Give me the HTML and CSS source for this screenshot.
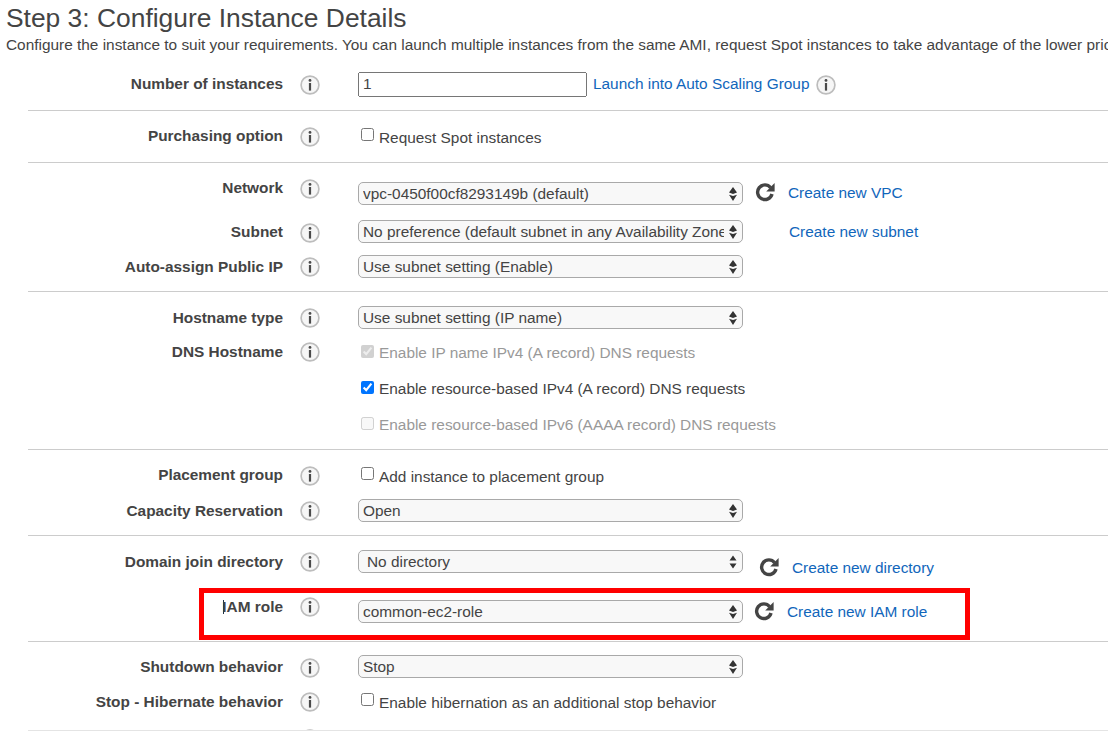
FILE: index.html
```html
<!DOCTYPE html>
<html lang="en">
<head>
  <meta charset="UTF-8">
  <title>Step 3: Configure Instance Details</title>
  <link rel="stylesheet" href="styles.css">
</head>
<body>
  <svg class="defs" width="0" height="0">
    <symbol id="info" viewBox="0 0 20 20">
      <circle cx="10" cy="10" r="8.9" fill="#f6f6f6" stroke="#bdbdbd" stroke-width="1.7"/>
      <circle cx="10" cy="5.4" r="1.4" fill="#4a4a4a"/>
      <rect x="8.9" y="8" width="2.2" height="7.6" fill="#4a4a4a"/>
    </symbol>
    <symbol id="refresh" viewBox="0 0 20 20">
      <path d="M15.6 5.6A7.3 7.3 0 1 0 17 12" fill="none" stroke="#444" stroke-width="3.4"/>
      <path d="M19.6 1v8.4h-8.4z" fill="#444"/>
    </symbol>
  </svg>

  <h1>Step 3: Configure Instance Details</h1>
  <p class="intro">Configure the instance to suit your requirements. You can launch multiple instances from the same AMI, request Spot instances to take advantage of the lower pricing, assign an access management role to the instance, and more.</p>

  <form class="details">
    <!-- Instances -->
    <div class="section s-instances">
      <div class="row row-input">
        <label class="name">Number of instances</label>
        <svg class="info"><use href="#info"/></svg>
        <div class="field">
          <input class="count" type="text" value="1">
          <a class="link launch" href="#">Launch into Auto Scaling Group</a>
          <svg class="info info-inline"><use href="#info"/></svg>
        </div>
      </div>
    </div>

    <!-- Purchasing -->
    <div class="section s-purchasing">
      <div class="row row-check">
        <label class="name">Purchasing option</label>
        <svg class="info"><use href="#info"/></svg>
        <div class="field"><label class="check"><input type="checkbox">Request Spot instances</label></div>
      </div>
    </div>

    <!-- Network -->
    <div class="section s-network">
      <div class="row row-up">
        <label class="name">Network</label>
        <svg class="info"><use href="#info"/></svg>
        <div class="field">
          <select class="pick"><option>vpc-0450f00cf8293149b (default)</option></select>
          <svg class="refresh refresh-vpc"><use href="#refresh"/></svg>
          <a class="link link-vpc" href="#">Create new VPC</a>
        </div>
      </div>
      <div class="row row-low gap-15">
        <label class="name">Subnet</label>
        <svg class="info"><use href="#info"/></svg>
        <div class="field">
          <select class="pick"><option>No preference (default subnet in any Availability Zone)</option></select>
          <a class="link link-subnet" href="#">Create new subnet</a>
        </div>
      </div>
      <div class="row gap-12">
        <label class="name">Auto-assign Public IP</label>
        <svg class="info"><use href="#info"/></svg>
        <div class="field"><select class="pick"><option>Use subnet setting (Enable)</option></select></div>
      </div>
    </div>

    <!-- Hostname -->
    <div class="section s-hostname">
      <div class="row">
        <label class="name">Hostname type</label>
        <svg class="info"><use href="#info"/></svg>
        <div class="field"><select class="pick"><option>Use subnet setting (IP name)</option></select></div>
      </div>
      <div class="row row-check row-dns gap-12">
        <label class="name">DNS Hostname</label>
        <svg class="info"><use href="#info"/></svg>
        <div class="field"><label class="check off"><input type="checkbox" checked disabled>Enable IP name IPv4 (A record) DNS requests</label></div>
      </div>
      <div class="row row-check gap-12">
        <div class="name"></div>
        <div class="info"></div>
        <div class="field"><label class="check"><input type="checkbox" checked>Enable resource-based IPv4 (A record) DNS requests</label></div>
      </div>
      <div class="row row-check gap-12">
        <div class="name"></div>
        <div class="info"></div>
        <div class="field"><label class="check off"><input type="checkbox" disabled>Enable resource-based IPv6 (AAAA record) DNS requests</label></div>
      </div>
    </div>

    <!-- Placement -->
    <div class="section s-placement">
      <div class="row row-check">
        <label class="name">Placement group</label>
        <svg class="info"><use href="#info"/></svg>
        <div class="field"><label class="check"><input type="checkbox">Add instance to placement group</label></div>
      </div>
      <div class="row gap-11">
        <label class="name">Capacity Reservation</label>
        <svg class="info"><use href="#info"/></svg>
        <div class="field"><select class="pick"><option>Open</option></select></div>
      </div>
    </div>

    <!-- Directory and role -->
    <div class="section s-directory">
      <div class="row">
        <label class="name">Domain join directory</label>
        <svg class="info"><use href="#info"/></svg>
        <div class="field">
          <select class="pick pick-plain"><option>No directory</option></select>
          <svg class="refresh refresh-dir"><use href="#refresh"/></svg>
          <a class="link link-dir" href="#">Create new directory</a>
        </div>
      </div>
      <div class="row row-up row-iam gap-27">
        <label class="name"><span class="caret"></span>IAM role</label>
        <svg class="info"><use href="#info"/></svg>
        <div class="field">
          <select class="pick"><option>common-ec2-role</option></select>
          <svg class="refresh refresh-iam"><use href="#refresh"/></svg>
          <a class="link link-iam" href="#">Create new IAM role</a>
        </div>
      </div>
      <div class="callout"></div>
    </div>

    <!-- Shutdown -->
    <div class="section s-shutdown">
      <div class="row row-low">
        <label class="name">Shutdown behavior</label>
        <svg class="info"><use href="#info"/></svg>
        <div class="field"><select class="pick"><option>Stop</option></select></div>
      </div>
      <div class="row row-check row-stop gap-12">
        <label class="name">Stop - Hibernate behavior</label>
        <svg class="info"><use href="#info"/></svg>
        <div class="field"><label class="check"><input type="checkbox">Enable hibernation as an additional stop behavior</label></div>
      </div>
      <div class="row row-cut gap-15">
        <div class="name"></div>
        <svg class="info"><use href="#info"/></svg>
      </div>
    </div>
  </form>
</body>
</html>
```

FILE: styles.css
```css
html, body {
  margin: 0;
  height: 737px;
  overflow: hidden;
  background-color: #fff;
}

body {
  font-family: "Liberation Sans", Arial, sans-serif;
  font-size: 15.4px;
  color: #444;
}

.defs {
  position: absolute;
}

h1 {
  margin: 0;
  padding: 3px 0 0 6px;
  height: 32px;
  font-size: 26.4px;
  line-height: 30px;
  font-weight: normal;
  white-space: nowrap;
}

.intro {
  margin: 0;
  padding-left: 6px;
  height: 25px;
  line-height: 20px;
  white-space: nowrap;
  overflow: hidden;
}

.details {
  margin-left: 28px;
}

.section {
  position: relative;
  border-bottom: 1px solid #ccc;
}

.s-instances { padding: 12px 0 13px; }
.s-purchasing { padding: 14px 0 13px; }
.s-network { padding: 19px 0 13px; }
.s-hostname { padding: 14px 0 12px; }
.s-placement { padding: 14px 0 13px; }
.s-directory { padding: 14px 0 18px; }
.s-shutdown { padding: 13px 0 0; height: 75px; overflow: hidden; border-bottom-color: #e4e4e4; }

.row {
  display: flex;
  align-items: center;
  height: 23px;
}

.row-input { height: 25px; }
.row-check { height: 24px; }

.gap-11 { margin-top: 11px; }
.gap-12 { margin-top: 12px; }
.gap-15 { margin-top: 15px; }
.gap-27 { margin-top: 27px; }

.name {
  flex: none;
  width: 255px;
  text-align: right;
  font-weight: bold;
  line-height: 20px;
}

.row-input > .name,
.row-check > .name {
  margin-bottom: 2px;
}

.row-stop > .name {
  margin-bottom: 0;
}

.row-up > .name {
  margin-bottom: 12px;
}

.row-iam > .name {
  margin-bottom: 10px;
}

.info {
  flex: none;
  align-self: flex-start;
  width: 20px;
  height: 20px;
  margin: 2px 0 0 17px;
}

.row-input > .info { margin-top: 3px; }
.row-dns > .info { margin-top: 1px; }
.row-low > .info { margin-top: 3px; }
.row-up > .info { margin-top: -3px; }
.row-cut > .info { margin-top: 0; }

.field {
  display: flex;
  align-items: center;
  margin-left: 38px;
}

.count {
  box-sizing: border-box;
  width: 229px;
  height: 25px;
  padding: 0 3px 2px;
  font: inherit;
  color: #444;
}

.pick {
  appearance: none;
  box-sizing: border-box;
  width: 385px;
  height: 23px;
  padding: 0 18px 0 4px;
  border: 1px solid #a9a9a9;
  border-radius: 5px;
  font: inherit;
  color: #444;
  background: #f8f8f8 url("data:image/svg+xml,%3Csvg xmlns='http://www.w3.org/2000/svg' width='10' height='16'%3E%3Cpath d='M5 1 9 6.5 5 8 1 6.5zM5 15 1 8.8 5 10 9 8.8z' fill='%23333'/%3E%3C/svg%3E") no-repeat right 4px center;
}

.pick-plain {
  padding-left: 8px;
  background-image: url("data:image/svg+xml,%3Csvg xmlns='http://www.w3.org/2000/svg' width='10' height='16'%3E%3Cpath d='M5 1.5 8.5 6.5H1.5zM5 14.5 1.5 9.5H8.5z' fill='%23333'/%3E%3C/svg%3E");
}

.check {
  display: flex;
  align-items: center;
  line-height: 20px;
  padding-top: 1px;
}

.row-dns ~ .row-check .check,
.row-dns .check {
  padding-top: 0;
}

.check input {
  margin: 0 5px 0 3px;
  position: relative;
  top: -3px;
}

.row-dns ~ .row-check .check input,
.row-dns .check input {
  top: -2px;
}

.off {
  color: #999;
}

.link {
  color: #1166bb;
  text-decoration: none;
  white-space: nowrap;
}

.launch { margin: 0 0 2px 6px; }
.link-vpc { margin-left: 13px; margin-bottom: 1px; }
.link-subnet { margin-left: 46px; }
.link-dir { margin-left: 13px; margin-top: 13px; }
.link-iam { margin-left: 13px; }

.info-inline {
  align-self: center;
  margin: 0 0 0 7px;
}

.refresh {
  flex: none;
  width: 20px;
  height: 20px;
  margin-left: 12px;
}

.refresh-vpc { margin-bottom: 3px; }
.refresh-dir { margin-left: 16px; margin-top: 10px; }
.refresh-iam { margin-left: 11px; margin-bottom: 1px; }

.caret {
  display: inline-block;
  height: 14px;
  margin: 0 -2px 0 1px;
  border-left: 1px solid #234;
  vertical-align: -2px;
}

/* red box drawn over the IAM role row */
.callout {
  position: absolute;
  left: 171px;
  top: 52px;
  width: 771px;
  height: 52px;
  box-sizing: border-box;
  border: 5px solid #f00;
}
```
